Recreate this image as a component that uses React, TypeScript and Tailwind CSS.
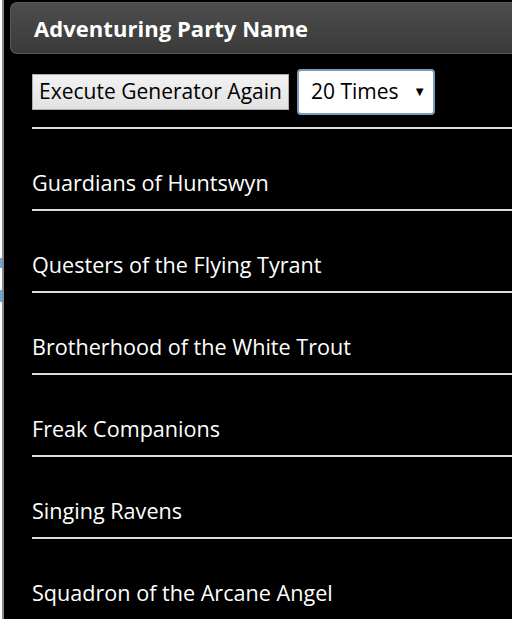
import React, { useState } from 'react';

const names = [
  'Guardians of Huntswyn',
  'Questers of the Flying Tyrant',
  'Brotherhood of the White Trout',
  'Freak Companions',
  'Singing Ravens',
  'Squadron of the Arcane Angel',
];

export default function App() {
  const [times, setTimes] = useState('20');

  return (
    <div className="flex h-[619px] w-[512px] overflow-hidden bg-white" style={{ fontFamily: '"Open Sans", "Noto Sans", sans-serif' }}>
      {/* page edge behind the panel */}
      <div className="flex w-[2px] shrink-0 flex-col">
        <div className="h-[258px]" />
        <div className="h-[10px] bg-[#6fa8dc]" />
        <div className="h-[22px]" />
        <div className="h-[12px] bg-[#6fa8dc]" />
      </div>
      <div className="flex min-w-0 flex-1 flex-col border-l-2 border-[#8a8a8a] bg-black">
        <div className="ml-[6px] mt-[2px] flex h-[52px] shrink-0 items-center rounded-l-[7px] border border-r-0 border-[#5a5a5a] bg-gradient-to-b from-[#4d4d4d] to-[#3a3a3a] pl-[23px]">
          <h1 className="text-[22px] font-bold leading-none tracking-[0.05px] text-white">Adventuring Party Name</h1>
        </div>

        <div className="flex flex-col pl-[28px]">
          <div className="flex h-[75px] items-center gap-[8px] border-b-2 border-[#dcdcdc] pt-[2px]">
            <button className="h-[36px] w-[257px] whitespace-nowrap border border-[#adadad] bg-gradient-to-b from-[#f2f2f2] to-[#e2e2e2] px-[3px] text-[21px] leading-none text-black">
              Execute Generator Again
            </button>
            <div className="relative h-[46px] w-[138px]">
              <select
                value={times}
                onChange={(e) => setTimes(e.target.value)}
                className="h-full w-full appearance-none rounded-[4px] border-2 border-[#7b9cb9] bg-white pl-[12px] text-[21px] leading-none text-black outline-none"
              >
                <option value="1">1 Time</option>
                <option value="5">5 Times</option>
                <option value="10">10 Times</option>
                <option value="20">20 Times</option>
              </select>
              <span className="pointer-events-none absolute right-[9px] top-[13px] text-[13px] text-black">▼</span>
            </div>
          </div>

          {names.map((n) => (
            <div key={n} className="flex h-[82px] shrink-0 items-end border-b-2 border-[#dcdcdc] pb-[14px]">
              <span className="whitespace-nowrap text-[21.6px] leading-[24px] text-white">{n}</span>
            </div>
          ))}
        </div>
      </div>
    </div>
  );
}
